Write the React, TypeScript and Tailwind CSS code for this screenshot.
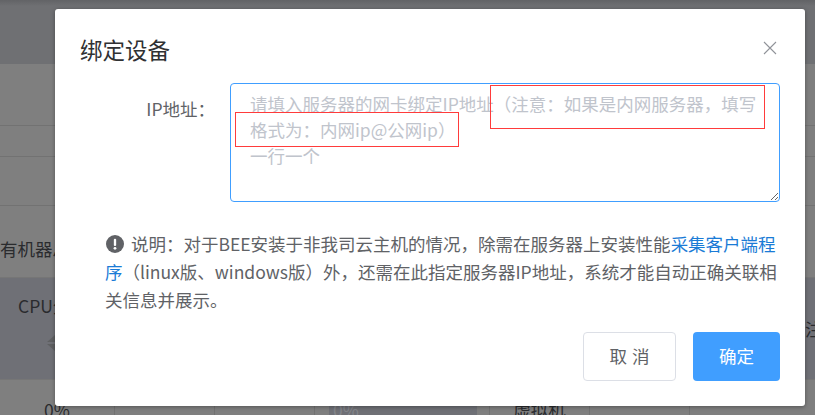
const font = { fontFamily: '"Noto Sans CJK SC", "Noto Sans", sans-serif' };

function Caret() {
  return (
    <svg width="20" height="16" viewBox="0 0 20 16" className="fill-[#5f6062]">
      <path d="M10 0 18 7H2zM10 16 2 9H18z" />
    </svg>
  );
}

function Backdrop() {
  const cell = "border-r border-[#727272] text-center";
  return (
    <div className="absolute inset-0 bg-[#7f7f7f] overflow-hidden text-[17.5px] leading-[26px] text-[#2a2b2e] flex flex-col">
      <div className="h-[64px] shrink-0 bg-[linear-gradient(#626366_0,#6f7073_6px)]" />
      <div className="h-[62px] shrink-0 border-b border-[#727272]" />
      <div className="h-[31px] shrink-0 border-b border-[#727272]" />
      <div className="h-[49px] shrink-0 border-b border-[#727272]" />
      <div className="h-[71px] shrink-0 pt-[30px] whitespace-nowrap">有机器总数</div>
      <div className="h-[103px] shrink-0 bg-[#6f7076] border-y border-[#767676] pt-[15px] pl-[18px] pr-0 flex justify-between whitespace-nowrap">
        <div className="flex flex-col">
          <span>CPU分</span>
          <span className="pl-[27px] pt-[16px]"><Caret /></span>
        </div>
        <span className="pt-[23px] w-[10px] overflow-hidden">注</span>
      </div>
      <div className="flex h-[36px] shrink-0 pt-[17px]">
        <div className={`${cell} w-[115px]`}>0%</div>
        <div className={`${cell} w-[100px] pt-[10px]`}>--</div>
        <div className={`${cell} w-[100px] pt-[10px]`}>--</div>
        <div className={`${cell} w-[175px] pl-[14px] text-left relative`}>
          <div className="absolute left-[14px] top-[-17px] h-[55px] w-[148px] bg-[#6f7076]" />
          <span className="relative pl-[4px] text-[#83858a]">0%</span>
        </div>
        <div className={`${cell} w-[100px]`}>虚拟机</div>
        <div className={`${cell} w-[100px] pt-[10px]`}>--</div>
        <div className="w-[125px] pt-[10px] pl-[100px]">--</div>
      </div>
    </div>
  );
}

export default function App() {
  return (
    <div style={font} className="relative w-[815px] h-[415px] overflow-hidden">
      <Backdrop />
      <div className="absolute left-[55px] top-[9px] w-[750px] h-[397px] bg-white rounded-[3px] shadow-[0_1px_4px_rgba(0,0,0,0.35)] px-[25px]">
        <div className="flex justify-between items-start h-[74px] pt-[25px]">
          <span className="text-[22.5px] text-[#303133] leading-[30px]">绑定设备</span>
          <svg width="14" height="14" viewBox="0 0 14 14" className="mt-[7px] mr-[3px] text-[#909399]">
            <path d="M1 1 13 13M13 1 1 13" stroke="currentColor" strokeWidth="1.1" fill="none" />
          </svg>
        </div>
        <div className="flex items-start">
          <label className="w-[135px] shrink-0 pt-[13px] text-[17.5px] leading-[26px] text-[#606266] text-right whitespace-nowrap">IP地址：</label>
          <textarea
            className="ml-[15px] w-[550px] h-[119px] border border-[#409eff] rounded-[4px] pl-[19px] pr-[20px] py-[7px] text-[17.5px] leading-[26px] text-[#606266] outline-none placeholder:text-[#c0c4cc]"
            placeholder={"请填入服务器的网卡绑定IP地址（注意：如果是内网服务器，填写格式为：内网ip@公网ip）\n一行一个"}
            readOnly
          />
        </div>
        <div className="mt-[28px] ml-[25px] w-[675px] text-[17.5px] leading-[28px] text-[#606266]">
          <svg width="18" height="18" viewBox="0 0 17 17" className="inline-block align-[-2px] ml-[1px] mr-[7px]">
            <circle cx="8.5" cy="8.5" r="8.5" fill="#606266" />
            <rect x="7.4" y="3.5" width="2.2" height="7" rx="1" fill="#fff" />
            <circle cx="8.5" cy="12.6" r="1.3" fill="#fff" />
          </svg>
          说明：对于BEE安装于非我司云主机的情况，除需在服务器上安装性能
          <span className="text-[#1a7bd6]">采集客户端程序</span>
          （linux版、windows版）外，还需在此指定服务器IP地址，系统才能自动正确关联相关信息并展示。
        </div>
        <div className="flex justify-end gap-[17px] mt-[18px]">
          <button className="w-[93px] h-[49px] border border-[#dcdfe6] rounded-[4px] text-[17.5px] text-[#606266] bg-white [word-spacing:1px]">取 消</button>
          <button className="w-[87px] h-[49px] rounded-[4px] text-[17.5px] text-white bg-[#409eff]">确定</button>
        </div>
      </div>
      <div className="absolute left-[490px] top-[85px] w-[275px] h-[44px] border border-[#ff3b3b]" />
      <div className="absolute left-[235px] top-[112px] w-[224px] h-[35px] border border-[#ff3b3b]" />
    </div>
  );
}
